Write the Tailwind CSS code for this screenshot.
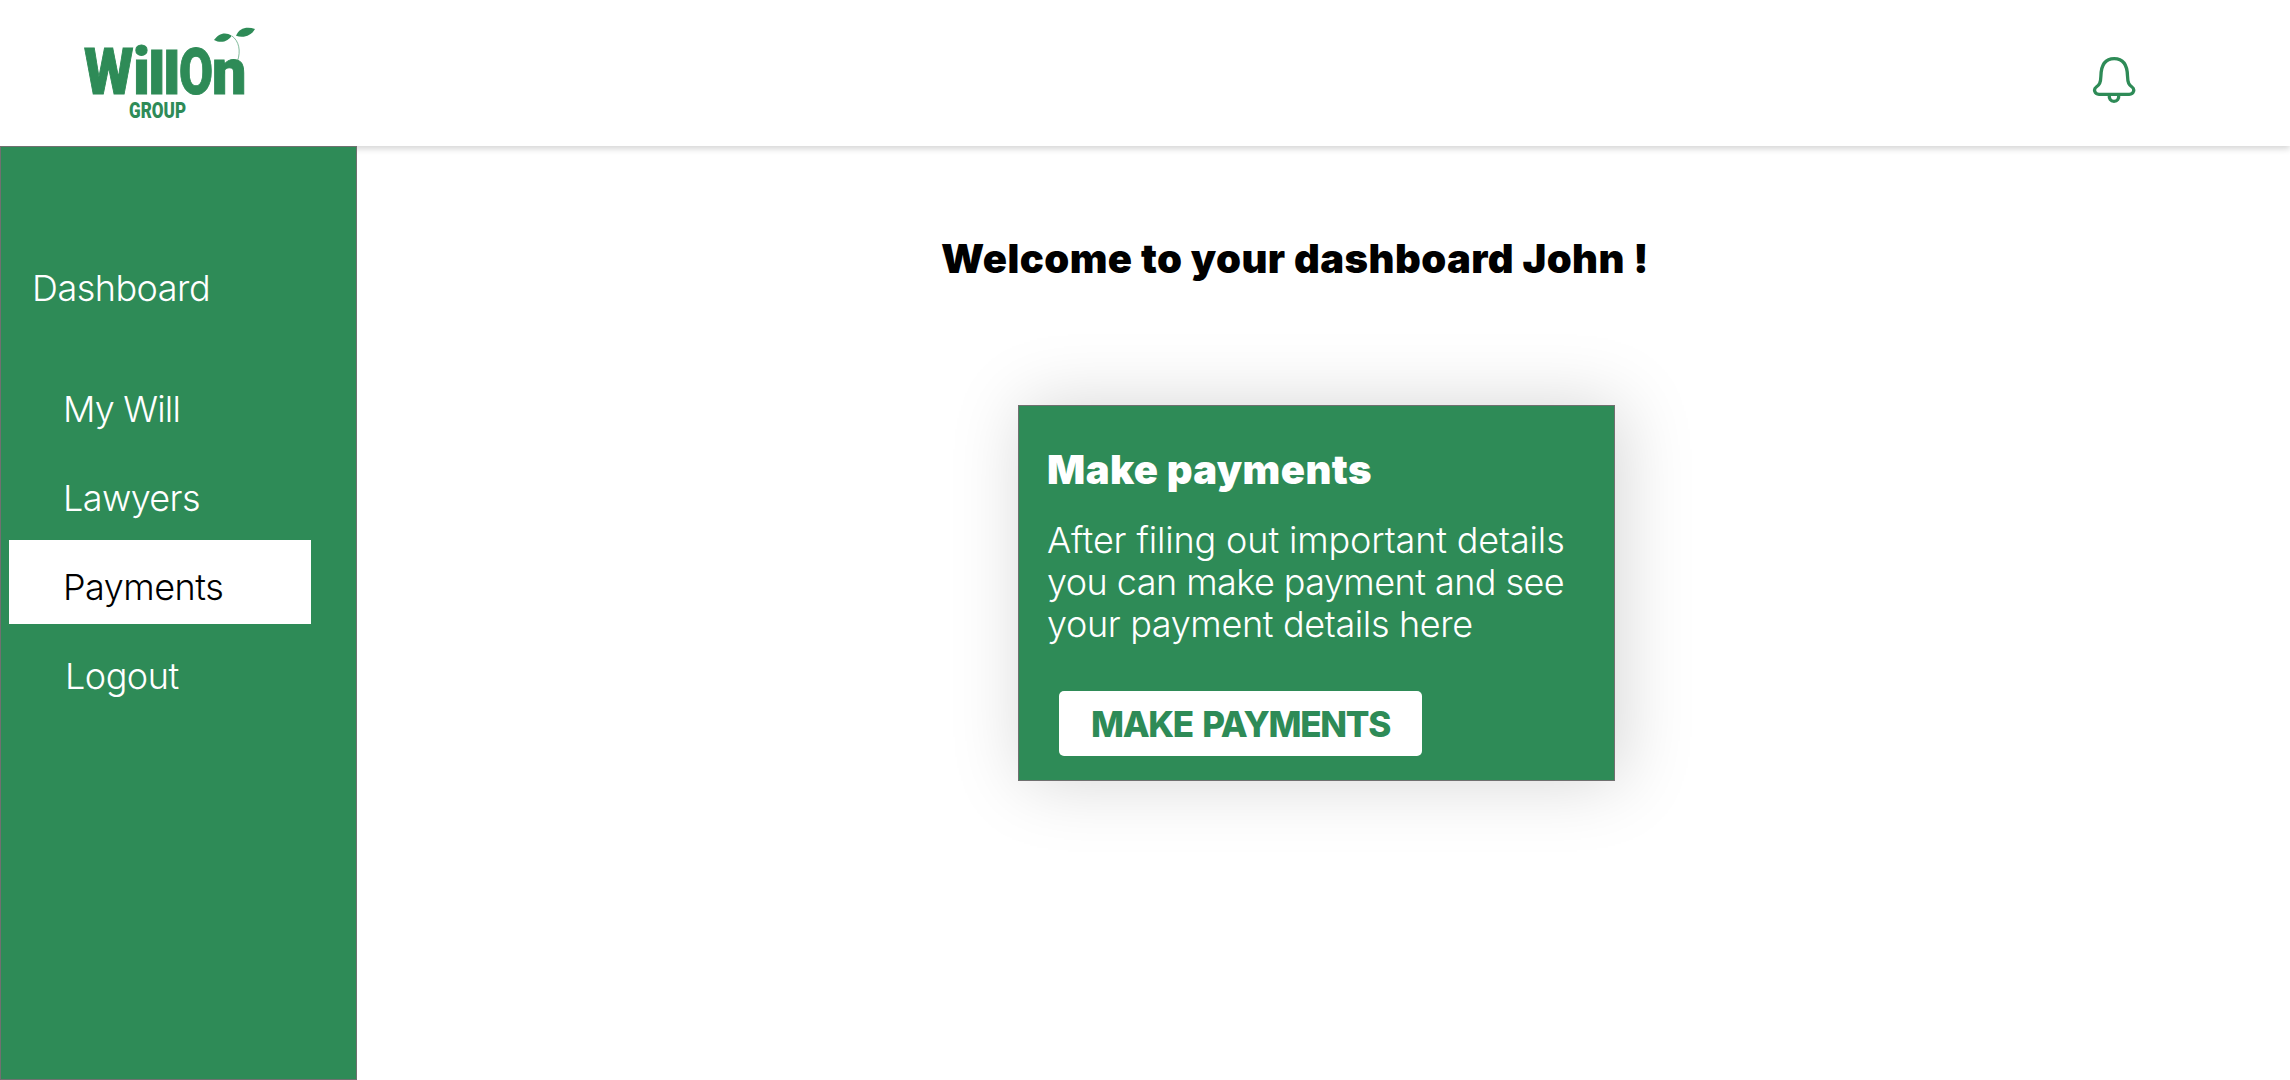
<!DOCTYPE html>
<html lang="en">
<head>
<meta charset="utf-8">
<title>WillOn Group – Payments</title>
<script src="https://cdn.jsdelivr.net/npm/@tailwindcss/browser@4"></script>
</head>
<body class="bg-white text-black font-['Inter',sans-serif] h-[1080px] w-[2290px] overflow-hidden flex flex-col">
  <header class="h-[146px] shrink-0 flex justify-between items-start pl-[80px] pr-[154px] pt-5 bg-white shadow-[0_3px_6px_rgba(0,0,0,0.16)]">
    <svg class="w-[180px] h-[104px]" viewBox="80 20 180 104" fill="#2e8b57" font-family="Roboto, sans-serif" font-weight="900" aria-label="WillOn Group">
      <g font-size="65" stroke="#2e8b57" stroke-width="1">
        <text x="84" y="94" textLength="49.500" lengthAdjust="spacingAndGlyphs">W</text>
        <text x="133" y="94" textLength="17" lengthAdjust="spacingAndGlyphs">i</text>
        <text x="148.300" y="94" font-size="60" textLength="17" lengthAdjust="spacingAndGlyphs">l</text>
        <text x="163.300" y="94" font-size="60" textLength="17" lengthAdjust="spacingAndGlyphs">l</text>
        <text x="179" y="94" textLength="34" lengthAdjust="spacingAndGlyphs">O</text>
        <text x="212" y="94" textLength="34.500" lengthAdjust="spacingAndGlyphs">n</text>
      </g>
      <text x="129" y="118" font-size="22" textLength="57" lengthAdjust="spacingAndGlyphs">GROUP</text>
      <path d="M214 40C218 34 225 31 231.700 35.700C229 40 222 44.500 214 40Z"/>
      <path d="M236 35.700C239 28 247 26 255 29C251 36 243 38.500 236 35.700Z"/>
      <path d="M232 36C239 41 241 51 237.500 61" fill="none" stroke="#2e8b57" stroke-width="0.6"/>
    </svg>
    <svg class="w-[44px] h-[48px] mt-[36px]" viewBox="0 0 44 48" fill="none" stroke="#2e8b57" stroke-width="3.300">
      <path d="M7 38.300C2.300 38.300 1.300 33 4.300 31C7.300 29 8.700 27 8.900 20C9.100 9 13 2.600 22.200 2.600C31.200 2.600 35.300 9 35.500 20C35.700 27 37 29 40 31C43 33 42 38.300 37.300 38.300Z"/>
      <path d="M17.300 38.500C16.800 43 18.800 45.400 22 45.400C25.200 45.400 27.200 43 26.700 38.500"/>
    </svg>
  </header>
  <div class="flex grow">
    <aside class="w-[357px] bg-[#2e8b57] border border-[#707070] text-white text-[36px] leading-[44px] font-light tracking-[-0.5px] relative">
      <h2 class="mt-[119px] ml-[31px]">Dashboard</h2>
      <nav class="mt-[52px] ml-2 w-[302px] flex flex-col gap-[5px]">
        <a class="h-[84px] pt-[25px] pl-[54px] tracking-[-0.8px]">My Will</a>
        <a class="h-[84px] pt-[25px] pl-[54px] tracking-[-0.6px]">Lawyers</a>
        <a class="h-[84px] pt-[25px] pl-[54px] bg-white text-black">Payments</a>
        <a class="h-[84px] pt-[25px] pl-[56px]">Logout</a>
      </nav>
    </aside>
    <main class="grow">
      <h1 class="mt-[89px] ml-[584px] text-[40px] leading-[48px] font-black tracking-[0.43px] whitespace-nowrap">Welcome to your dashboard John !</h1>
      <section class="mt-[122px] ml-[661px] w-[597px] h-[376px] bg-[#2e8b57] border border-[#707070] text-white pl-[28px] pt-[40px] shadow-[6px_0_68px_rgba(0,0,0,0.17)]">
        <h3 class="text-[40px] leading-[48px] font-black tracking-[0.4px]">Make payments</h3>
        <p class="mt-[25px] text-[36px] leading-[42px] font-light whitespace-nowrap">
          <span class="block tracking-[-0.13px]">After filing out important details</span>
          <span class="block tracking-[-0.55px]">you can make payment and see</span>
          <span class="block tracking-[-0.35px]">your payment details here</span>
        </p>
        <button class="mt-[46px] ml-[12px] w-[363px] h-[65px] rounded-[5px] bg-white text-[#2e8b57] text-[35px] leading-[44px] font-extrabold tracking-[-1.3px] [word-spacing:3px] whitespace-nowrap">MAKE PAYMENTS</button>
      </section>
    </main>
  </div>
</body>
</html>
